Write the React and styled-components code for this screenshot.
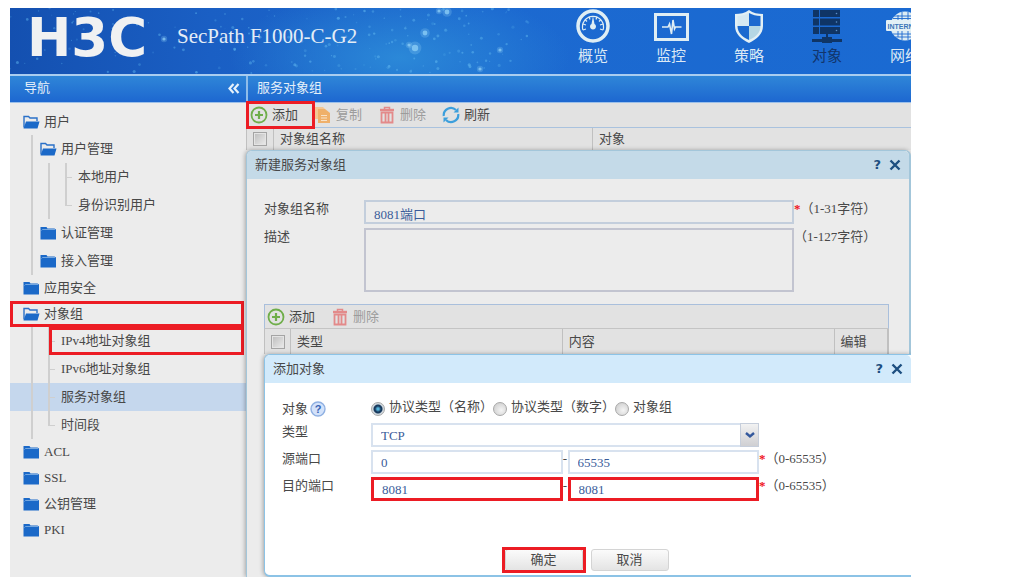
import React from 'react';
import styled, { createGlobalStyle } from 'styled-components';

export default function App() {
  return (
    <>
      <GlobalStyle />
      <Page>
        <Header>
          <Starfield />
          <Logo>H3C</Logo>
          <Product>SecPath F1000-C-G2</Product>
          <MainNav>
            {MENU.map(({ label, Icon, active }) => (
              <MainNavItem key={label} href="#" $active={active}>
                <Icon />
                {label}
              </MainNavItem>
            ))}
          </MainNav>
        </Header>

        <Columns>
          <Sidebar>
            <BarTitle>
              导航
              <Collapse type="button" aria-label="收起导航">
                <ChevronsIcon />
              </Collapse>
            </BarTitle>
            <Tree>
              {TREE.map((node) => (
                <TreeItem key={node.label} {...node} />
              ))}
            </Tree>
          </Sidebar>

          <Main>
            <BarTitle $divided>服务对象组</BarTitle>
            <Toolbar>
              <Marked $on>
                <ToolButton type="button">
                  <AddIcon />
                  添加
                </ToolButton>
              </Marked>
              <ToolButton type="button" disabled>
                <CopyIcon />
                复制
              </ToolButton>
              <ToolButton type="button" disabled>
                <TrashIcon />
                删除
              </ToolButton>
              <ToolButton type="button">
                <RefreshIcon />
                刷新
              </ToolButton>
            </Toolbar>
            <Table>
              <thead>
                <tr>
                  <Th $width="27px">
                    <Checkbox aria-label="全选对象组" />
                  </Th>
                  <Th $width="48%">对象组名称</Th>
                  <Th>对象</Th>
                </tr>
              </thead>
            </Table>
            <GroupDialog />
          </Main>
        </Columns>
      </Page>
    </>
  );
}

function TreeItem({ label, guides = 0, elbow, last, open, folder, selected, marked }) {
  return (
    <TreeRow $nested={guides > 0} $selected={selected} $marked={marked}>
      {Array.from({ length: guides }, (_, i) => (
        <Guide key={i} />
      ))}
      {elbow && <Elbow $last={last} />}
      {folder && <FolderIcon open={open} />}
      <TreeLink href="#">{label}</TreeLink>
    </TreeRow>
  );
}

function DialogHead({ title, active }) {
  return (
    <DialogBar $active={active}>
      <DialogTitle>{title}</DialogTitle>
      <DialogAction type="button" aria-label="帮助">
        ?
      </DialogAction>
      <DialogAction type="button" aria-label="关闭">
        <CloseIcon />
      </DialogAction>
    </DialogBar>
  );
}

function GroupDialog() {
  return (
    <Dialog>
      <DialogHead title="新建服务对象组" />
      <GroupForm>
        <Field>
          <FieldLabel htmlFor="name">对象组名称</FieldLabel>
          <TextInput id="name" defaultValue="8081端口" />
          <Note>
            <Required>*</Required>（1-31字符）
          </Note>
        </Field>
        <Field>
          <FieldLabel htmlFor="desc">描述</FieldLabel>
          <TextArea id="desc" />
          <Note>（1-127字符）</Note>
        </Field>
      </GroupForm>

      <ObjectArea>
        <ObjectPanel>
          <Toolbar $boxed>
            <Marked>
              <ToolButton type="button">
                <AddIcon />
                添加
              </ToolButton>
            </Marked>
            <ToolButton type="button" disabled>
              <TrashIcon />
              删除
            </ToolButton>
          </Toolbar>
          <Table $boxed>
            <thead>
              <tr>
                <Th $width="26px">
                  <Checkbox aria-label="全选对象" />
                </Th>
                <Th>类型</Th>
                <Th>内容</Th>
                <Th $width="54px">编辑</Th>
              </tr>
            </thead>
          </Table>
        </ObjectPanel>
        <ObjectDialog />
      </ObjectArea>
    </Dialog>
  );
}

function ObjectDialog() {
  return (
    <Dialog $active>
      <DialogHead title="添加对象" active />
      <ObjectForm>
        <RadioField>
          <RadioCaption id="kind">
            对象
            <HelpIcon />
          </RadioCaption>
          <RadioGroup role="radiogroup" aria-labelledby="kind">
            <RadioLabel>
              <Radio name="kind" defaultChecked />
              协议类型（名称）
            </RadioLabel>
            <RadioLabel>
              <Radio name="kind" />
              协议类型（数字）
            </RadioLabel>
            <RadioLabel>
              <Radio name="kind" />
              对象组
            </RadioLabel>
          </RadioGroup>
        </RadioField>
        <Field>
          <FieldLabel htmlFor="type">类型</FieldLabel>
          <SelectBox>
            <Select id="type" defaultValue="TCP">
              <option>TCP</option>
              <option>UDP</option>
            </Select>
            <SelectArrow>
              <ArrowIcon />
            </SelectArrow>
          </SelectBox>
          <Note $wide />
        </Field>
        <PortField id="source" label="源端口" from="0" to="65535" />
        <PortField id="target" label="目的端口" from="8081" to="8081" marked />
        <Buttons>
          <Marked $on $tight>
            <PushButton type="button">确定</PushButton>
          </Marked>
          <PushButton type="button">取消</PushButton>
        </Buttons>
      </ObjectForm>
    </Dialog>
  );
}

function PortField({ id, label, from, to, marked }) {
  return (
    <Field>
      <FieldLabel htmlFor={id}>{label}</FieldLabel>
      <TextInput id={id} defaultValue={from} $marked={marked} />
      <Dash>-</Dash>
      <TextInput aria-label={`${label} 结束`} defaultValue={to} $marked={marked} />
      <Note $wide>
        <Required>*</Required>（0-65535）
      </Note>
    </Field>
  );
}

/* ---------- icons ---------- */

function Starfield() {
  const stars = [];
  let seed = 7;
  const next = () => {
    seed = (seed * 16807) % 2147483647;
    return seed / 2147483647;
  };
  for (let i = 0; i < 190; i += 1) {
    stars.push([next() * 520, next() * 66, 0.5 + next() * 1.1, 0.2 + next() * 0.4]);
  }
  const bright = [
    [415, 25, 3],
    [437, 4, 3],
    [405, 40, 4],
    [399, 37, 2],
    [429, 3, 2],
    [470, 61, 2],
    [154, 31, 2],
    [490, 42, 2],
  ];
  return (
    <Sky aria-hidden="true">
      {stars.map(([x, y, r, o], i) => (
        <circle key={i} cx={x} cy={y} r={r} fill="#5db4ee" opacity={o} />
      ))}
      {bright.map(([x, y, r]) => (
        <g key={x} fill="#8fd0f7">
          <circle cx={x} cy={y} r={r * 1.6} opacity="0.25" />
          <circle cx={x} cy={y} r={r * 0.8} opacity="0.75" />
        </g>
      ))}
    </Sky>
  );
}

function GaugeIcon() {
  return (
    <svg width="38" height="36" viewBox="0 0 38 36" fill="none" stroke="#dfeef4">
      <circle cx="19" cy="18" r="15" strokeWidth="3.5" />
      <path d="M9 22a10.5 10.5 0 1 1 20 0" strokeWidth="1.2" />
      <path d="M9 16l3 1M11 11.500l2 2M15 8.500l1 3M23 8.500l-1 3M27 11.500l-2 2M29 16l-3 1M9 22l3-1M29 22l-3-1" strokeWidth="1.2" />
      <path d="M19 8l1.500 8a3 3 0 1 1-3 0z" fill="#dfeef4" stroke="none" />
    </svg>
  );
}

function MonitorIcon() {
  return (
    <svg width="38" height="36" viewBox="0 0 38 36" fill="none" stroke="#dfeef4">
      <rect x="3.500" y="6.500" width="32" height="25" strokeWidth="3" />
      <path d="M10 19h6l1.500-3 2 10 1.500-14 1.500 9 1-2h6" strokeWidth="1.600" />
    </svg>
  );
}

function ShieldIcon() {
  return (
    <svg width="38" height="36" viewBox="0 0 38 36">
      <path d="M19 2c4 3 9 4 14 4v12c0 8-6 13-14 17C11 31 5 26 5 18V6c5 0 10-1 14-4z" fill="#e3f0f5" />
      <path d="M19 5v13H7.500V8c4 0 8-1 11.500-3z" fill="#d6e9f2" />
      <path d="M19 5c3.500 2 7.500 3 11.500 3v10H19z" fill="#1b69cf" />
      <path d="M7.500 18H19v14C12 29 7.500 24.500 7.500 18z" fill="#1b69cf" />
      <path d="M19 18h11.500C30.500 24.500 26 29 19 32z" fill="#b5d7e4" />
    </svg>
  );
}

function ServerIcon() {
  return (
    <svg width="38" height="36" viewBox="0 0 38 36" fill="#0f3566">
      {[2, 10.5, 19].map((y) => (
        <g key={y}>
          <rect x="5" y={y} width="6" height="7" />
          <rect x="12" y={y} width="20" height="7" />
          <circle cx="28.500" cy={y + 3.5} r="0.8" fill="#5d8fc9" />
        </g>
      ))}
      <path d="M18 26h2v3h4v2h10v3H24v1H14v-1H4v-3h10v-2h4z" />
    </svg>
  );
}

function GlobeIcon() {
  return (
    <svg width="38" height="36" viewBox="0 0 38 36">
      <circle cx="19" cy="18" r="14.500" fill="#dcecf4" />
      <path d="M12 7v22M16 4v28M22 4v28M26 7v22M7 10.500h24M8 8h22M7 26h24M9 29h20" stroke="#1b69cf" strokeWidth="0.9" />
      <rect x="0" y="12" width="38" height="11" rx="1" fill="#e3f0f6" />
      <text x="19" y="20.500" textAnchor="middle" fontFamily="Liberation Sans" fontSize="7" fontWeight="700" fill="#3c76b8">
        INTERNET
      </text>
    </svg>
  );
}

function ChevronsIcon() {
  return (
    <svg width="12" height="11" viewBox="0 0 12 11" fill="none" stroke="#e6f1fa" strokeWidth="2.200">
      <path d="M5.500 1l-4 4.500 4 4.500M10.500 1l-4 4.500 4 4.500" />
    </svg>
  );
}

function FolderIcon({ open }) {
  return (
    <svg width="17" height="14" viewBox="0 0 17 14">
      {open ? (
        <>
          <path d="M1 12.500V1.500h4.500l1.500 1.500h7v3" fill="none" stroke="#2a70c8" strokeWidth="1.400" />
          <path d="M3 6.500H16.500l-2 7H0.500z" fill="#1b69c8" />
        </>
      ) : (
        <>
          <path d="M0.500 1h6l1 1.500h7l1.500 1V13.500H0.500z" fill="#1b69c8" />
          <path d="M1.500 4.500l1-1h12.500" fill="none" stroke="#8cb8e6" strokeWidth="0.8" />
        </>
      )}
    </svg>
  );
}

function AddIcon() {
  return (
    <svg width="18" height="18" viewBox="0 0 18 18" fill="none" stroke="#6fae4a">
      <circle cx="9" cy="9" r="7.500" strokeWidth="1.800" />
      <path d="M9 5v8M5 9h8" strokeWidth="2.200" />
    </svg>
  );
}

function CopyIcon() {
  return (
    <svg width="18" height="18" viewBox="0 0 18 18">
      <path d="M1 1h8l2 2v10H1z" fill="#f3c795" />
      <path d="M4 3h7l5 4v10H4z" fill="#efb06a" />
      <path d="M7 9.500h6M7 12h6M7 14.500h6" stroke="#f8e2c8" />
    </svg>
  );
}

function TrashIcon() {
  return (
    <svg width="18" height="18" viewBox="0 0 18 18" fill="none" stroke="#e38a8a">
      <path d="M2 4h14" strokeWidth="2.400" />
      <path d="M6.500 3V1.500h5V3" strokeWidth="1.500" />
      <path d="M3.500 6.500h11v10h-11z" strokeWidth="1.800" />
      <path d="M7.500 7v9M10.500 7v9" strokeWidth="1.800" />
    </svg>
  );
}

function RefreshIcon() {
  return (
    <svg width="18" height="18" viewBox="0 0 18 18" fill="none" stroke="#3c9fdc" strokeWidth="2.200">
      <path d="M1.800 10A7.200 7.200 0 0 1 14 4M16.200 8A7.200 7.200 0 0 1 4 14" />
      <path d="M16.500 1.500v5h-5zM1.500 16.500v-5h5z" fill="#3c9fdc" stroke="none" />
    </svg>
  );
}

function CloseIcon() {
  return (
    <svg width="12" height="12" viewBox="0 0 12 12" stroke="#1d4f80" strokeWidth="2.400">
      <path d="M1.500 1.500l9 9M10.500 1.500l-9 9" />
    </svg>
  );
}

function HelpIcon() {
  return (
    <svg width="16" height="16" viewBox="0 0 16 16">
      <circle cx="8" cy="8" r="7" fill="#d3e2fa" stroke="#8fb0e2" strokeWidth="1.400" />
      <text x="8" y="12" textAnchor="middle" fontFamily="Liberation Sans" fontSize="11" fontWeight="700" fill="#3763b4">
        ?
      </text>
    </svg>
  );
}

function ArrowIcon() {
  return (
    <svg width="10" height="7" viewBox="0 0 10 7" fill="none" stroke="#33589c" strokeWidth="2.400">
      <path d="M1 1l4 3.500L9 1" />
    </svg>
  );
}

/* ---------- data ---------- */

const MENU = [
  { label: '概览', Icon: GaugeIcon },
  { label: '监控', Icon: MonitorIcon },
  { label: '策略', Icon: ShieldIcon },
  { label: '对象', Icon: ServerIcon, active: true },
  { label: '网络', Icon: GlobeIcon },
];

const TREE = [
  { label: '用户', folder: true, open: true },
  { label: '用户管理', guides: 1, folder: true, open: true },
  { label: '本地用户', guides: 2, elbow: true },
  { label: '身份识别用户', guides: 2, elbow: true, last: true },
  { label: '认证管理', guides: 1, folder: true },
  { label: '接入管理', guides: 1, folder: true },
  { label: '应用安全', folder: true },
  { label: '对象组', folder: true, open: true, marked: 'row' },
  { label: 'IPv4地址对象组', guides: 1, elbow: true, marked: 'leaf' },
  { label: 'IPv6地址对象组', guides: 1, elbow: true },
  { label: '服务对象组', guides: 1, elbow: true, selected: true },
  { label: '时间段', guides: 1, elbow: true, last: true },
  { label: 'ACL', folder: true },
  { label: 'SSL', folder: true },
  { label: '公钥管理', folder: true },
  { label: 'PKI', folder: true },
];

/* ---------- styles ---------- */

const GlobalStyle = createGlobalStyle`
  *, *::before, *::after {
    box-sizing: border-box;
  }

  body {
    margin: 0;
    background: #fff;
    color: #484848;
    font: 13px/18px 'Liberation Serif', 'Noto Sans CJK SC', serif;
  }

  button, input, select, textarea {
    margin: 0;
    font: inherit;
    color: inherit;
  }

  svg {
    display: block;
    flex: none;
  }
`;

const Page = styled.div`
  margin: 8px 108px 6px 10px;
  overflow: hidden;
`;

const Header = styled.header`
  position: relative;
  display: flex;
  align-items: center;
  height: 68px;
  overflow: hidden;
  border-bottom: 2px solid #a9cdf0;
  background:
    radial-gradient(ellipse 170px 70px at 390px 50px, #2b88d8, rgba(43, 136, 216, 0)),
    linear-gradient(90deg, #1450b0 0, #1a5fc4 200px, #1c69d0 480px, #1a6ad2 100%);
`;

const Sky = styled.svg`
  position: absolute;
  inset: 0;
  width: 100%;
  height: 100%;
`;

const Logo = styled.span`
  position: relative;
  width: 154px;
  padding-bottom: 6px;
  text-align: center;
  color: #f0f1f2;
  font: bold 53px/50px 'DejaVu Sans', sans-serif;
`;

const Product = styled.h1`
  position: relative;
  flex: 1;
  margin: 0;
  padding: 0 0 10px 13px;
  color: #e4edf6;
  font-size: 21px;
  font-weight: normal;
  line-height: 24px;
  white-space: nowrap;
`;

const MainNav = styled.nav`
  position: relative;
  display: flex;
  flex: 0 0 357px;
  min-width: 0;
  width: 357px;
  align-self: flex-start;
`;

const MainNavItem = styled.a`
  display: flex;
  flex: 0 0 78px;
  flex-direction: column;
  align-items: center;
  gap: 2px;
  color: ${({ $active }) => ($active ? '#12356b' : '#dce9f5')};
  font-size: 15px;
  line-height: 20px;
  text-decoration: none;
`;

const Columns = styled.div`
  display: flex;
`;

const Sidebar = styled.aside`
  flex: 0 0 236px;
  background: #ececec;
`;

const Main = styled.main`
  flex: 1;
  min-width: 0;
  background: #ececec;
`;

const BarTitle = styled.h2`
  display: flex;
  align-items: center;
  justify-content: space-between;
  height: 27px;
  margin: 0;
  padding: 0 6px 2px ${({ $divided }) => ($divided ? '9px' : '14px')};
  border-left: ${({ $divided }) => ($divided ? '2px solid #8fbdea' : '0')};
  border-bottom: 1px solid #9cc0ea;
  background: linear-gradient(#2f86d8, #1d67d0);
  color: #e4eff9;
  font-size: 13px;
  font-weight: normal;
`;

const Collapse = styled.button`
  padding: 0;
  border: 0;
  background: none;
`;

const Tree = styled.ul`
  margin: 0;
  padding: 6px 0 0;
  list-style: none;
`;

const TreeRow = styled.li`
  position: relative;
  display: flex;
  align-items: center;
  height: ${({ $nested }) => ($nested ? '28px' : '26px')};
  padding-left: 13px;
  background: ${({ $selected }) => ($selected ? '#c5d7ed' : 'none')};

  &::after {
    content: '';
    display: ${({ $marked }) => ($marked ? 'block' : 'none')};
    position: absolute;
    inset: 0 2px 0 ${({ $marked }) => ($marked === 'leaf' ? '39px' : '0')};
    border: 3px solid #ec1c24;
    pointer-events: none;
  }
`;

const TreeLink = styled.a`
  margin-left: 4px;
  color: inherit;
  text-decoration: none;
`;

const Guide = styled.span`
  width: 17px;
  height: 100%;
  background: linear-gradient(#cfcfcf, #cfcfcf) 8px 0 / 2px 100% no-repeat;
`;

const Elbow = styled.span`
  width: 17px;
  height: 100%;
  background:
    linear-gradient(#cfcfcf, #cfcfcf) 8px 0 / 2px ${({ $last }) => ($last ? '50%' : '100%')} no-repeat,
    linear-gradient(#cfcfcf, #cfcfcf) 8px 50% / 7px 1px no-repeat;
`;

const Toolbar = styled.div`
  display: flex;
  align-items: center;
  gap: 16px;
  height: 25px;
  padding-left: ${({ $boxed }) => ($boxed ? '2px' : '4px')};
  border: ${({ $boxed }) => ($boxed ? '1px solid #a9bfdc' : '0')};
  border-bottom: 1px solid ${({ $boxed }) => ($boxed ? '#c4c4c4' : '#a9c2de')};
  background: #e2e2e2;
`;

const ToolButton = styled.button`
  display: flex;
  align-items: center;
  gap: 4px;
  padding: 0;
  border: 0;
  background: none;
  color: ${({ disabled }) => (disabled ? '#9c9c9c' : '#484848')};
`;

// red frame that points the reader at a control
const Marked = styled.span`
  position: relative;

  &::after {
    content: '';
    display: ${({ $on }) => ($on ? 'block' : 'none')};
    position: absolute;
    inset: ${({ $tight }) => ($tight ? '-2px -3px' : '-5px -17px -5px -4px')};
    border: 3px solid #ec1c24;
    pointer-events: none;
  }
`;

const Table = styled.table`
  width: 100%;
  table-layout: fixed;
  border-collapse: collapse;
  background: #e2e2e2;
  border-right: ${({ $boxed }) => ($boxed ? '2px solid #c0c0c0' : '0')};

  th {
    height: ${({ $boxed }) => ($boxed ? '25px' : '22px')};
  }
`;

const Th = styled.th`
  width: ${({ $width }) => $width || 'auto'};
  padding: 0 6px;
  border-left: 1px solid #c0c0c0;
  font-weight: normal;
  text-align: left;
`;

const Checkbox = styled.input.attrs({ type: 'checkbox' })`
  display: block;
  appearance: none;
  width: 14px;
  height: 14px;
  border: 1px solid #a4a4a4;
  background: linear-gradient(135deg, #bcbcbc, #ececec);
  box-shadow: inset 0 0 0 1px #e4e4e4;
`;

const Dialog = styled.section`
  position: relative;
  margin-right: ${({ $active }) => ($active ? '-2px' : '0')};
  border: solid ${({ $active }) => ($active ? '#8cc3e6' : '#a3c6da')};
  border-width: ${({ $active }) => ($active ? '1px 0 2px 1px' : '1px 2px 0 1px')};
  border-radius: ${({ $active }) => ($active ? '6px 0 0 6px' : '6px 6px 0 0')};
  background: ${({ $active }) => ($active ? '#fff' : '#ececec')};
  box-shadow: -1px 0 4px rgba(0, 0, 0, 0.3);
`;

const DialogBar = styled.header`
  display: flex;
  align-items: center;
  gap: 8px;
  height: 28px;
  padding: 0 8px;
  border-radius: 5px 5px 0 0;
  background: ${({ $active }) => ($active ? '#d2eafb' : '#c4dae8')};
`;

const DialogTitle = styled.h3`
  flex: 1;
  margin: 0;
  font-size: 13px;
  font-weight: normal;
`;

const DialogAction = styled.button`
  padding: 0;
  border: 0;
  background: none;
  color: #1d4f80;
  font: bold 13px/18px 'DejaVu Sans', sans-serif;
`;

const GroupForm = styled.form`
  display: grid;
  gap: 4px;
  padding: 21px 0 12px 17px;
`;

const ObjectArea = styled.div`
  padding-left: 17px;
`;

const ObjectPanel = styled.div`
  margin-right: 20px;
`;

const ObjectForm = styled.form`
  display: grid;
  gap: 3px;
  padding: 15px 0 4px 17px;
`;

const Field = styled.div`
  display: flex;
  align-items: flex-start;
`;

const FieldLabel = styled.label`
  flex: 0 0 100px;

  ${ObjectForm} & {
    flex-basis: 89px;
  }
`;

const TextInput = styled.input`
  flex: 1;
  width: 0;
  height: 24px;
  padding: 2px 8px 0;
  border: ${({ $marked }) => ($marked ? '3px solid #ec1c24' : '2px solid #c3cedc')};
  border-radius: 0;
  background: transparent;
  color: #3a5c9a;

  ${ObjectForm} & {
    border-color: ${({ $marked }) => ($marked ? '#ec1c24' : '#d8e2ef')};
  }
`;

const TextArea = styled.textarea`
  flex: 1;
  width: 0;
  height: 64px;
  border: 2px solid #c2c4d0;
  background: transparent;
  resize: none;
`;

const Note = styled.span`
  flex: 0 0 ${({ $wide }) => ($wide ? '152px' : '115px')};
  white-space: nowrap;
`;

const Required = styled.b`
  color: #f0141e;
`;

const Dash = styled.span`
  flex: 0 0 5px;
  text-align: center;
`;

const RadioField = styled.div`
  display: flex;
  align-items: flex-start;
  height: 22px;
`;

const RadioCaption = styled.span`
  display: flex;
  align-items: center;
  gap: 2px;
  flex: 0 0 89px;
  padding-top: 2px;
`;

const RadioGroup = styled.div`
  display: flex;
`;

const RadioLabel = styled.label`
  display: flex;
  align-items: center;
  gap: 4px;
  white-space: nowrap;
`;

const Radio = styled.input.attrs({ type: 'radio' })`
  appearance: none;
  width: 14px;
  height: 14px;
  margin-top: 3px;
  border: 1px solid #a8a8a8;
  border-radius: 50%;
  background: radial-gradient(circle at 60% 60%, #f4f4f4, #c8c8c8);

  &:checked {
    background: radial-gradient(circle, #55b4dc 0 1px, #173a5e 3px 4px, #d0d8de 5px);
  }
`;

const SelectBox = styled.div`
  position: relative;
  flex: 1;
`;

const Select = styled.select`
  display: block;
  appearance: none;
  width: 100%;
  height: 24px;
  padding: 2px 8px 0;
  border: 2px solid #d8e2ef;
  border-radius: 0;
  background: #fff;
  color: #3a5c9a;
`;

const SelectArrow = styled.span`
  position: absolute;
  top: 0;
  right: 0;
  display: grid;
  place-items: center;
  width: 19px;
  height: 24px;
  border: 1px solid #c6cedb;
  background: linear-gradient(#f2f2f2, #cfcfd2);
  pointer-events: none;
`;

const Buttons = styled.div`
  display: flex;
  justify-content: center;
  gap: 8px;
  padding: 45px 20px 0 0;
`;

const PushButton = styled.button`
  display: block;
  width: 78px;
  height: 22px;
  padding: 0;
  border: 1px solid #d4d4d4;
  border-radius: 3px;
  background: linear-gradient(#fbfbfb, #e4e4e4);
  line-height: 18px;
`;
